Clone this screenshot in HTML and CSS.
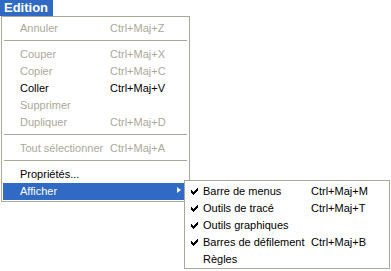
FILE: index.html
```html
<!DOCTYPE html>
<html lang="fr">

<head>
  <meta charset="UTF-8">
  <title>Edition</title>
  <link rel="stylesheet" href="styles.css">
</head>

<body>
  <div class="menubar"><span class="menu-title">Edition</span></div>

  <div class="menu">
    <div class="item disabled"><span class="label">Annuler</span><span class="key">Ctrl+Maj+Z</span></div>
    <div class="sep"></div>
    <div class="item disabled"><span class="label">Couper</span><span class="key">Ctrl+Maj+X</span></div>
    <div class="item disabled"><span class="label">Copier</span><span class="key">Ctrl+Maj+C</span></div>
    <div class="item"><span class="label">Coller</span><span class="key">Ctrl+Maj+V</span></div>
    <div class="item disabled"><span class="label">Supprimer</span><span class="key"></span></div>
    <div class="item disabled"><span class="label">Dupliquer</span><span class="key">Ctrl+Maj+D</span></div>
    <div class="sep"></div>
    <div class="item disabled"><span class="label">Tout sélectionner</span><span class="key">Ctrl+Maj+A</span></div>
    <div class="sep"></div>
    <div class="item"><span class="label">Propriétés...</span><span class="key"></span></div>
    <div class="item active">
      <span class="label">Afficher</span><span class="key"></span>
      <span class="arrow"></span>

      <!-- Sous-menu Afficher -->
      <div class="submenu">
        <div class="sub-item">
          <svg class="check" width="7" height="7" viewBox="0 0 7 7"><path d="M0 2h1v1h1v1h1v-1h1v-1h1v-1h1v-1h1v3h-1v1h-1v1h-1v1h-1v1h-1v-1h-1v-1h-1z" fill="#000"/></svg>
          <span class="label">Barre de menus</span><span class="key">Ctrl+Maj+M</span>
        </div>
        <div class="sub-item">
          <svg class="check" width="7" height="7" viewBox="0 0 7 7"><path d="M0 2h1v1h1v1h1v-1h1v-1h1v-1h1v-1h1v3h-1v1h-1v1h-1v1h-1v1h-1v-1h-1v-1h-1z" fill="#000"/></svg>
          <span class="label">Outils de tracé</span><span class="key">Ctrl+Maj+T</span>
        </div>
        <div class="sub-item">
          <svg class="check" width="7" height="7" viewBox="0 0 7 7"><path d="M0 2h1v1h1v1h1v-1h1v-1h1v-1h1v-1h1v3h-1v1h-1v1h-1v1h-1v1h-1v-1h-1v-1h-1z" fill="#000"/></svg>
          <span class="label">Outils graphiques</span><span class="key"></span>
        </div>
        <div class="sub-item">
          <svg class="check" width="7" height="7" viewBox="0 0 7 7"><path d="M0 2h1v1h1v1h1v-1h1v-1h1v-1h1v-1h1v3h-1v1h-1v1h-1v1h-1v1h-1v-1h-1v-1h-1z" fill="#000"/></svg>
          <span class="label">Barres de défilement</span><span class="key">Ctrl+Maj+B</span>
        </div>
        <div class="sub-item">
          <span class="no-check"></span>
          <span class="label">Règles</span><span class="key"></span>
        </div>
      </div>
    </div>
  </div>
</body>

</html>
```

FILE: styles.css
```css
html,
body {
  min-height: 100%;
}

body {
  margin: 0;
  min-height: 271px;
  background-color: #fff;
  font-family: "Liberation Sans", Arial, sans-serif;
  font-size: 11px;
  color: #000;
}

.menubar {
  height: 16px;
}

.menu-title {
  display: inline-block;
  width: 49px;
  height: 16px;
  padding-left: 4px;
  background-color: #316ac5;
  color: #fff;
  font-size: 13px;
  font-weight: bold;
  line-height: 15px;
}

/* Menu principal */
.menu {
  width: 185px;
  margin-left: 1px;
  padding: 3px 1px 1px;
  border: 1px solid #aca899;
  background-color: #fff;
}

.item {
  position: relative;
  display: flex;
  height: 17px;
  line-height: 17px;
  padding-left: 17px;
  white-space: nowrap;
}

.item .label {
  width: 90px;
}

.disabled {
  color: #aca899;
}

.active {
  background-color: #316ac5;
  color: #fff;
}

.arrow {
  position: absolute;
  left: 174px;
  top: 4px;
  width: 0;
  height: 0;
  border-top: 3.5px solid transparent;
  border-bottom: 3.5px solid transparent;
  border-left: 4px solid #fff;
}

.sep {
  height: 1px;
  margin: 3px 1px 5px;
  background-color: #aca899;
}

/* Sous-menu */
.submenu {
  position: absolute;
  z-index: 1;
  left: 181px;
  top: -3px;
  width: 204px;
  padding: 2px 0 0;
  border: 1px solid #aca899;
  background-color: #fff;
  color: #000;
}

.sub-item {
  display: flex;
  align-items: center;
  height: 17px;
  line-height: 17px;
  padding-left: 6px;
  white-space: nowrap;
}

.check,
.no-check {
  width: 7px;
  height: 7px;
  margin-right: 5px;
  flex: none;
}

.sub-item .label {
  width: 108px;
}
```
